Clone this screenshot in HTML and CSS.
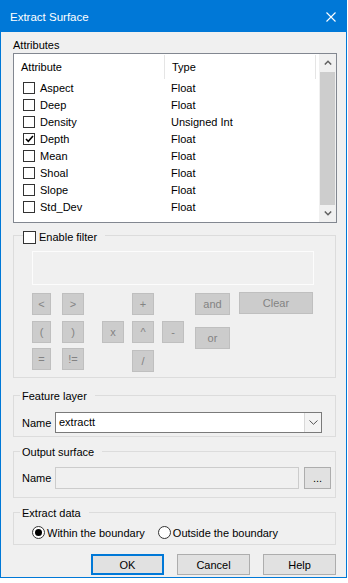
FILE: index.html
```html
<!DOCTYPE html>
<html lang="en">
<head>
    <meta charset="UTF-8">
    <title>Extract Surface</title>
    <link rel="stylesheet" href="styles.css">
</head>
<body>
    <div class="window">
        <div class="titlebar">
            <div class="title">Extract Surface</div>
            <svg class="close" width="10" height="10" viewBox="0 0 10 10"><path d="M0.5 0.5L9.5 9.5M9.5 0.5L0.5 9.5" stroke="#fff" stroke-width="1.1"/></svg>
        </div>
        <div class="content">
            <div class="section-label">Attributes</div>
            <div class="listbox">
                <div class="list-main">
                    <div class="list-header">
                        <div class="hcol hcol-attr">Attribute</div>
                        <div class="hcol hcol-type">Type</div>
                    </div>
                    <div class="list-row"><span class="cb"></span><span class="cell-attr">Aspect</span><span class="cell-type">Float</span></div>
                    <div class="list-row"><span class="cb"></span><span class="cell-attr">Deep</span><span class="cell-type">Float</span></div>
                    <div class="list-row"><span class="cb"></span><span class="cell-attr">Density</span><span class="cell-type">Unsigned Int</span></div>
                    <div class="list-row"><span class="cb checked"><svg width="9" height="8" viewBox="0 0 9 8"><path d="M1 4L3.3 6.3L8 1" stroke="#000" stroke-width="1.6" fill="none"/></svg></span><span class="cell-attr">Depth</span><span class="cell-type">Float</span></div>
                    <div class="list-row"><span class="cb"></span><span class="cell-attr">Mean</span><span class="cell-type">Float</span></div>
                    <div class="list-row"><span class="cb"></span><span class="cell-attr">Shoal</span><span class="cell-type">Float</span></div>
                    <div class="list-row"><span class="cb"></span><span class="cell-attr">Slope</span><span class="cell-type">Float</span></div>
                    <div class="list-row"><span class="cb"></span><span class="cell-attr">Std_Dev</span><span class="cell-type">Float</span></div>
                </div>
                <div class="scrollbar">
                    <div class="sb-btn"><svg width="8" height="5" viewBox="0 0 8 5"><path d="M0.8 4.5L4 1.3L7.2 4.5" stroke="#606060" stroke-width="1.5" fill="none"/></svg></div>
                    <div class="sb-thumb"></div>
                    <div class="sb-btn"><svg width="8" height="5" viewBox="0 0 8 5"><path d="M0.8 0.5L4 3.7L7.2 0.5" stroke="#606060" stroke-width="1.5" fill="none"/></svg></div>
                </div>
            </div>

            <div class="group filter-group">
                <div class="group-title filter-title">
                    <span class="box"></span>
                    <span>Enable filter</span>
                </div>
                <div class="filter-input"></div>
                <div class="ops">
                    <div class="op op-lt">&lt;</div>
                    <div class="op op-gt">&gt;</div>
                    <div class="op op-plus">+</div>
                    <div class="op op-and">and</div>
                    <div class="op op-clear">Clear</div>
                    <div class="op op-lp">(</div>
                    <div class="op op-rp">)</div>
                    <div class="op op-x">x</div>
                    <div class="op op-pow">^</div>
                    <div class="op op-minus">-</div>
                    <div class="op op-or">or</div>
                    <div class="op op-eq">=</div>
                    <div class="op op-ne">!=</div>
                    <div class="op op-div">/</div>
                </div>
            </div>

            <div class="group feature-group">
                <div class="group-title">Feature layer</div>
                <div class="field-row">
                    <div class="field-label">Name</div>
                    <div class="combo">
                        <div class="combo-text">extractt</div>
                        <div class="combo-btn"><svg width="9" height="5" viewBox="0 0 9 5"><path d="M0.5 0.5L4.5 4.3L8.5 0.5" stroke="#555" stroke-width="1" fill="none"/></svg></div>
                    </div>
                </div>
            </div>

            <div class="group output-group">
                <div class="group-title">Output surface</div>
                <div class="field-row">
                    <div class="field-label">Name</div>
                    <div class="textbox"></div>
                    <div class="btn browse">...</div>
                </div>
            </div>

            <div class="group extract-group">
                <div class="group-title">Extract data</div>
                <div class="radio-row">
                    <div class="radio-item"><span class="radio on"></span><span>Within the boundary</span></div>
                    <div class="radio-item"><span class="radio"></span><span>Outside the boundary</span></div>
                </div>
            </div>

            <div class="buttons">
                <div class="btn default">OK</div>
                <div class="btn">Cancel</div>
                <div class="btn">Help</div>
            </div>
        </div>
    </div>
</body>
</html>
```

FILE: styles.css
```css
* {
    box-sizing: border-box;
}
body {
    margin: 0;
    background-color: #fff;
    font-family: "Liberation Sans", Arial, sans-serif;
    font-size: 11px;
    color: #000;
}
.window {
    width: 347px;
    height: 578px;
    border: 1px solid #0078d7;
    background-color: #f0f0f0;
}
.titlebar {
    height: 31px;
    background-color: #0078d7;
    display: flex;
    align-items: center;
    justify-content: space-between;
    padding: 0 10px 0 9px;
    color: #fff;
}
.title {
    font-size: 11.5px;
    margin-top: 1px;
}
.close {
    margin-top: 1px;
}
.content {
    padding: 0 9px 0 12px;
}
.section-label {
    line-height: 16px;
    margin-top: 5px;
}

/* list view */
.listbox {
    height: 170px;
    border: 1px solid #828790;
    background-color: #fff;
    display: flex;
}
.list-main {
    flex: 1;
}
.list-header {
    height: 25px;
    display: flex;
    align-items: center;
}
.hcol {
    height: 24px;
    line-height: 24px;
    padding-left: 7px;
    border-right: 1px solid #e5e5e5;
}
.hcol-attr {
    width: 151px;
}
.hcol-type {
    width: 151px;
}
.list-row {
    height: 17px;
    display: flex;
    align-items: center;
    padding-left: 9px;
}
.cb {
    width: 12px;
    height: 12px;
    border: 1px solid #333;
    background-color: #fff;
    display: flex;
    align-items: center;
    justify-content: center;
}
.cell-attr {
    width: 129px;
    padding-left: 5px;
}
.cell-type {
    padding-left: 7px;
}
.scrollbar {
    width: 17px;
    background-color: #f0f0f0;
    display: flex;
    flex-direction: column;
}
.sb-btn {
    height: 17px;
    display: flex;
    align-items: center;
    justify-content: center;
}
.sb-thumb {
    flex: 1;
    margin: 1px 1px 0 1px;
    background-color: #cdcdcd;
}

/* group boxes */
.group {
    border: 1px solid #dcdcdc;
    margin-right: 1px;
    display: flex;
    flex-direction: column;
    align-items: flex-start;
}
.group-title {
    line-height: 16px;
    margin: -8px 0 0 6px;
    padding: 0 8px 0 2px;
    background-color: #f0f0f0;
}
.filter-group {
    margin-top: 12px;
    height: 143px;
}
.filter-title {
    display: flex;
    align-items: center;
    gap: 3px;
    margin: -7px 0 0 9px;
    padding: 0 8px 0 0;
}
.box {
    width: 13px;
    height: 13px;
    border: 1px solid #333;
    background-color: #fff;
}
.filter-input {
    width: 282px;
    height: 34px;
    margin: 6px 0 0 18px;
    border: 1px solid #fcfcfc;
    background-color: #f0f0f0;
}
.ops {
    margin: 8px 0 0 18px;
    display: grid;
    grid-template-columns: 30px 40px 30px 30px 33px 44px 74px;
    grid-template-rows: 28px 27px 22px;
}
.op {
    width: 22px;
    height: 22px;
    display: flex;
    align-items: center;
    justify-content: center;
    background-color: #cccccc;
    border: 1px solid #bfbfbf;
    color: #838383;
}
.op-lt { grid-column: 1; grid-row: 1; width: 19px; }
.op-gt { grid-column: 2; grid-row: 1; }
.op-plus { grid-column: 4; grid-row: 1; }
.op-and { grid-column: 6; grid-row: 1; width: 35px; }
.op-clear { grid-column: 7; grid-row: 1; width: 74px; margin-top: -1px; }
.op-lp { grid-column: 1; grid-row: 2; width: 19px; }
.op-rp { grid-column: 2; grid-row: 2; }
.op-x { grid-column: 3; grid-row: 2; }
.op-pow { grid-column: 4; grid-row: 2; }
.op-minus { grid-column: 5; grid-row: 2; }
.op-or { grid-column: 6; grid-row: 2; width: 35px; margin-top: 6px; }
.op-eq { grid-column: 1; grid-row: 3; width: 19px; }
.op-ne { grid-column: 2; grid-row: 3; }
.op-div { grid-column: 4; grid-row: 3; margin-top: 2px; }

.feature-group {
    margin-top: 17px;
    height: 42px;
}
.output-group {
    margin-top: 14px;
    height: 47px;
}
.extract-group {
    margin-top: 14px;
    height: 33px;
}
.field-row {
    display: flex;
    align-items: center;
    margin-top: 8px;
    width: 100%;
}
.field-label {
    width: 41px;
    padding-left: 8px;
}
.combo {
    width: 267px;
    height: 21px;
    border: 1px solid #7a7a7a;
    background-color: #fff;
    display: flex;
}
.combo-text {
    flex: 1;
    line-height: 19px;
    padding-left: 3px;
}
.combo-btn {
    width: 17px;
    border-left: 1px solid #d9d9d9;
    background-color: #f4f4f4;
    display: flex;
    align-items: center;
    justify-content: center;
}
.output-group .field-row {
    margin-top: 7px;
}
.textbox {
    width: 244px;
    height: 22px;
    border: 1px solid #cccccc;
    background-color: #f0f0f0;
}
.btn {
    display: flex;
    align-items: center;
    justify-content: center;
    background-color: #e1e1e1;
    border: 1px solid #adadad;
}
.browse {
    width: 27px;
    height: 22px;
    margin-left: 5px;
}
.radio-row {
    display: flex;
    gap: 13px;
    margin: 5px 0 0 18px;
}
.radio-item {
    display: flex;
    align-items: center;
    gap: 2px;
}
.radio {
    width: 13px;
    height: 13px;
    border: 1px solid #333;
    border-radius: 50%;
    background-color: #fff;
    display: flex;
    align-items: center;
    justify-content: center;
}
.radio.on::after {
    content: "";
    width: 7px;
    height: 7px;
    border-radius: 50%;
    background-color: #000;
}
.buttons {
    display: flex;
    justify-content: flex-end;
    gap: 13px;
    margin: 9px 1px 0 0;
}
.buttons .btn {
    width: 73px;
    height: 21px;
}
.buttons .default {
    border: 2px solid #0078d7;
}
```
